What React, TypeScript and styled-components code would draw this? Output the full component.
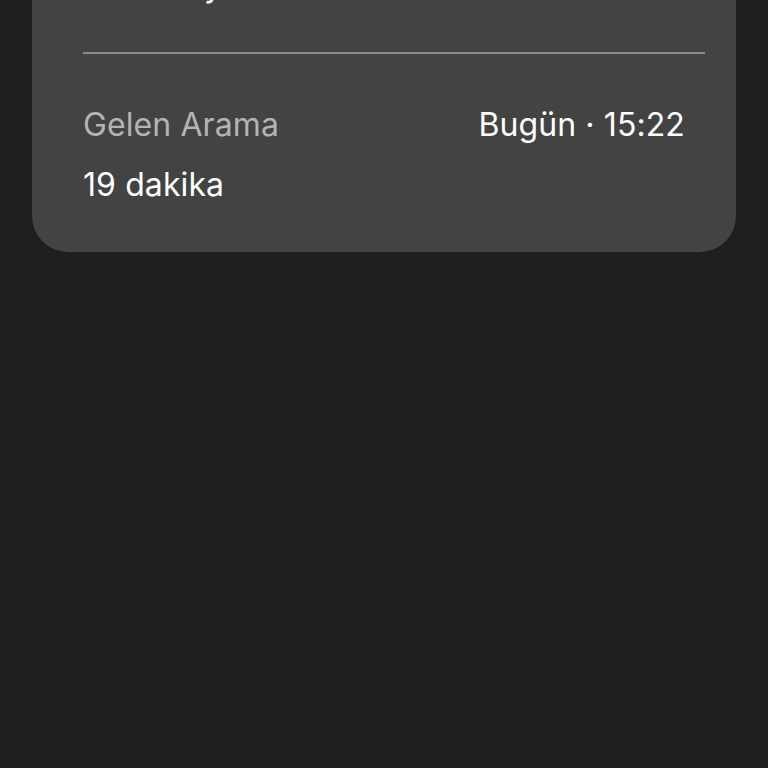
import React from "react";
import styled, { createGlobalStyle } from "styled-components";

const Global = createGlobalStyle`
  html, body { margin: 0; padding: 0; background: #1f1f1f; }
  body { font-family: Inter, "Noto Sans", "Liberation Sans", sans-serif; -webkit-font-smoothing: antialiased; }
  #root { min-height: 768px; }
`;

const Page = styled.div`
  height: 768px;
  overflow: hidden;
  background: #1f1f1f;
  padding: 0 32px;
  box-sizing: border-box;
`;

const Card = styled.section`
  margin-top: -56px;
  background: #434343;
  border-radius: 0 0 36px 36px;
  padding: 24px 31px 49px 51px;
  display: flex;
  flex-direction: column;
`;

const Title = styled.div`
  font-size: 32px;
  line-height: 36px;
  color: #ffffff;
  letter-spacing: 2.5px;
`;

const Divider = styled.hr`
  margin: 48px 0 0;
  border: 0;
  height: 2px;
  background: #8c8c8c;
`;

const Row = styled.div<{ $gap: number }>`
  margin-top: ${(p) => p.$gap}px;
  display: flex;
  justify-content: space-between;
  align-items: baseline;
  padding-right: 20px;
  font-size: 32px;
  line-height: 36px;
`;

const Label = styled.span<{ $muted?: boolean }>`
  color: ${(p) => (p.$muted ? "#b4b4b4" : "#ffffff")};
  letter-spacing: 0.1px;
`;

export default function App() {
  return (
    <>
      <Global />
      <Page>
        <Card>
          <Title>Ana Sayfa</Title>
          <Divider />
          <Row $gap={53}>
            <Label $muted>Gelen Arama</Label>
            <Label>Bugün · 15:22</Label>
          </Row>
          <Row $gap={24}>
            <Label>19 dakika</Label>
          </Row>
        </Card>
      </Page>
    </>
  );
}
